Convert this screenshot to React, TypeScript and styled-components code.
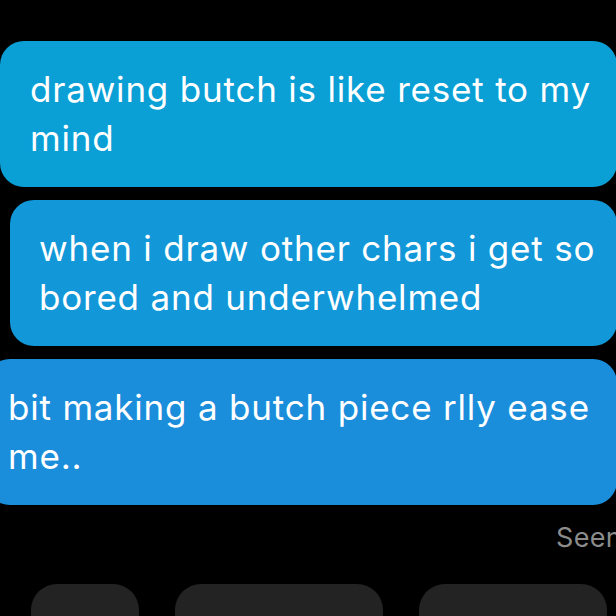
import React from "react";
import styled, { createGlobalStyle } from "styled-components";

const Global = createGlobalStyle`
  html, body { margin: 0; padding: 0; background: #000; }
  body { width: 616px; height: 616px; overflow: hidden; }
  #root { width: 616px; height: 616px; overflow: hidden; }
`;

const Screen = styled.div`
  width: 616px;
  height: 616px;
  overflow: hidden;
  background: #000;
  display: flex;
  flex-direction: column;
  align-items: flex-end;
  padding-top: 41px;
  box-sizing: border-box;
  font-family: Inter, "Liberation Sans", sans-serif;
`;

const Thread = styled.div`
  display: flex;
  flex-direction: column;
  align-items: flex-end;
  gap: 13px;
  width: 100%;
`;

const Bubble = styled.div<{ $left: number; $textX: number; $color: string }>`
  box-sizing: border-box;
  margin-left: ${(p) => p.$left}px;
  width: calc(100% - ${(p) => p.$left}px + 1px);
  margin-right: -1px;
  height: 146px;
  border-radius: 24px;
  background: ${(p) => p.$color};
  color: #fff;
  font-size: 35px;
  letter-spacing: 0.8px;
  line-height: 49px;
  padding: 24px 12px 0 ${(p) => p.$textX - p.$left}px;
`;

const Seen = styled.div`
  margin-top: 18px;
  margin-right: -6px;
  font-size: 27px;
  letter-spacing: 0.3px;
  color: #8c8c8c;
  line-height: 30px;
`;

const Actions = styled.div`
  margin-top: 31px;
  width: 100%;
  display: flex;
  gap: 36px;
  padding-left: 31px;
  box-sizing: border-box;
`;

const Action = styled.div<{ $w: number }>`
  width: ${(p) => p.$w}px;
  height: 60px;
  border-radius: 26px;
  background: #232323;
  flex-shrink: 0;
`;

export default function App() {
  return (
    <>
      <Global />
      <Screen>
        <Thread>
          <Bubble $left={0} $textX={30} $color="#0aa0d6">
            drawing butch is like reset to my mind
          </Bubble>
          <Bubble $left={10} $textX={39} $color="#1297d8">
            when i draw other chars i get so bored and underwhelmed
          </Bubble>
          <Bubble $left={-14} $textX={8} $color="#1a8ddb">
            bit making a butch piece rlly ease me..
          </Bubble>
        </Thread>
        <Seen>Seen</Seen>
        <Actions>
          <Action $w={108} />
          <Action $w={208} />
          <Action $w={188} />
        </Actions>
      </Screen>
    </>
  );
}
